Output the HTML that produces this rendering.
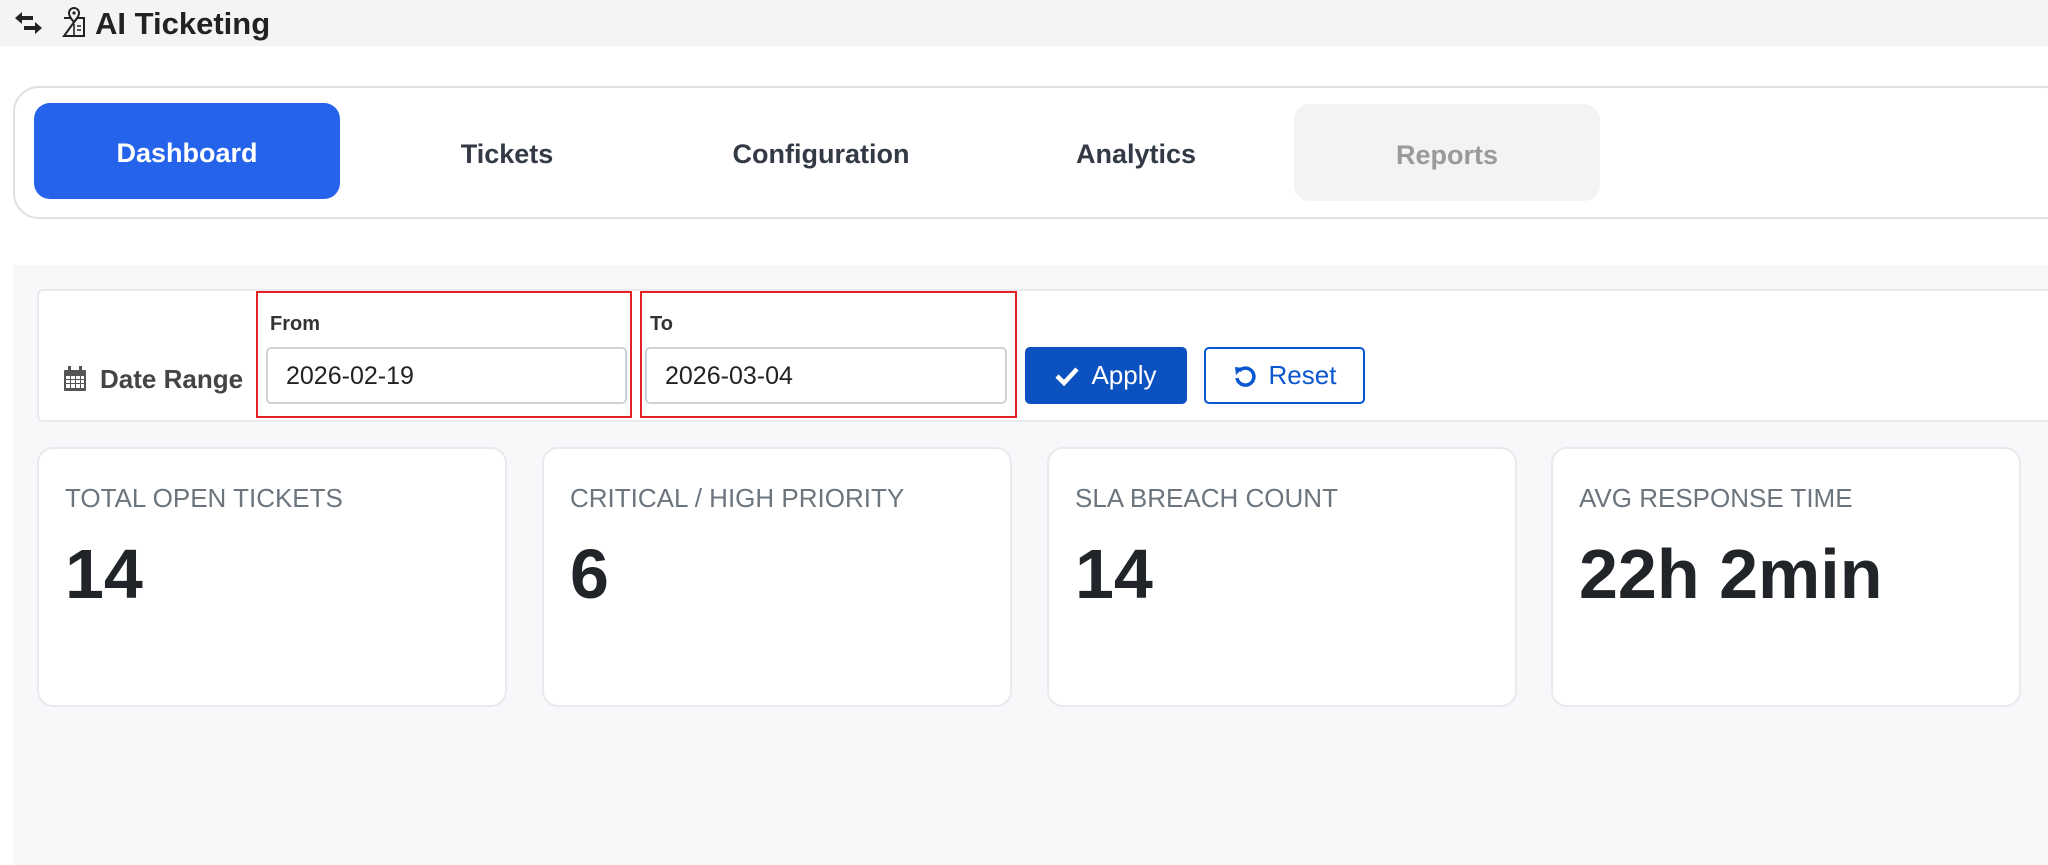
<!DOCTYPE html>
<html><head><meta charset="utf-8"><style>
*{box-sizing:border-box;margin:0;padding:0}
body{width:2048px;height:860px;overflow:hidden;background:#fff;font-family:"Liberation Sans",Arial,sans-serif;position:relative}
.hdr{position:absolute;left:0;top:0;width:2048px;height:46px;background:#f4f4f4}
.title{position:absolute;left:95px;top:6px;font-size:31px;font-weight:bold;color:#222}
.nav{position:absolute;left:13px;top:86px;width:2060px;height:133px;border:2px solid #e0e0e0;border-radius:26px;background:#fff}
.tab{position:absolute;top:107px;width:306px;height:96px;border-radius:16px;font-size:27px;font-weight:bold;color:#333a45;display:flex;align-items:center;justify-content:center;padding-top:6px}
.gray{position:absolute;left:13px;top:265px;width:2040px;height:600px;background:#f7f8fa}
.filter{position:absolute;left:37px;top:289px;width:2020px;height:133px;background:#fff;border:2px solid #e8eaed;border-radius:6px}
.red{position:absolute;top:291px;height:127px;border:2px solid #e32026}
.lbl{position:absolute;top:313px;font-size:20px;font-weight:bold;color:#333}
.inp{position:absolute;top:347px;height:57px;border:2px solid #cfd3d8;border-radius:5px;background:#fff;font-size:25px;color:#222;padding-left:18px;line-height:55px}
.btn{position:absolute;top:347px;height:57px;border-radius:5px;font-size:26px;display:flex;align-items:center;justify-content:center;gap:12px}
.card{position:absolute;top:447px;width:470px;height:260px;background:#fff;border:2px solid #e8eaed;border-radius:16px}
.card .l{position:absolute;left:26px;top:34px;font-size:26px;color:#6c757d}
.card .v{position:absolute;left:26px;top:85px;font-size:70px;font-weight:bold;color:#212529}
</style></head><body>
<div class="hdr">
<svg style="position:absolute;left:13px;top:10px" width="31" height="26" viewBox="0 0 31 26"><path d="M2 8 L9 2 V6 H20 V10 H9 V14 Z" fill="#222"/><path d="M29 18 L22 12 V16 H11 V20 H22 V24 Z" fill="#222"/></svg>
<svg style="position:absolute;left:61px;top:6px" width="26" height="32" viewBox="0 0 26 32"><path d="M3 12 H10 M16 12 H23 V30 H3 Z" fill="none" stroke="#222" stroke-width="2"/><path d="M13 2 a5 5 0 0 1 5 5 c0 4 -5 9 -5 9 s-5 -5 -5 -9 a5 5 0 0 1 5 -5z" fill="none" stroke="#222" stroke-width="2"/><circle cx="13" cy="7" r="1.6" fill="#222"/><path d="M13 18 V30 M16 20 H20 M16 24 H20" stroke="#222" stroke-width="1.6"/></svg>
<div class="title">AI Ticketing</div>
</div>
<div class="nav"></div>
<div class="tab" style="left:34px;top:103px;background:#2563eb;color:#fff;padding-top:4px">Dashboard</div>
<div class="tab" style="left:354px;top:103px">Tickets</div>
<div class="tab" style="left:668px;top:103px">Configuration</div>
<div class="tab" style="left:983px;top:103px">Analytics</div>
<div class="tab" style="left:1294px;background:#f3f3f3;color:#9a9a9a;height:97px;top:104px">Reports</div>
<div class="gray"></div>
<div class="filter"></div>
<svg style="position:absolute;left:63px;top:365px" width="24" height="27" viewBox="0 0 24 27"><rect x="1" y="5" width="22" height="21" fill="#555" rx="1"/><rect x="5" y="1" width="3" height="7" fill="#555"/><rect x="16" y="1" width="3" height="7" fill="#555"/><g fill="#fff"><rect x="3" y="11" width="4" height="3"/><rect x="8" y="11" width="4" height="3"/><rect x="13" y="11" width="4" height="3"/><rect x="18" y="11" width="3" height="3"/><rect x="3" y="15" width="4" height="3"/><rect x="8" y="15" width="4" height="3"/><rect x="13" y="15" width="4" height="3"/><rect x="18" y="15" width="3" height="3"/><rect x="3" y="19" width="4" height="4"/><rect x="8" y="19" width="4" height="4"/><rect x="13" y="19" width="4" height="4"/><rect x="18" y="19" width="3" height="4"/></g></svg>
<div style="position:absolute;left:100px;top:364px;font-size:26px;font-weight:bold;color:#444">Date Range</div>
<div class="red" style="left:256px;width:376px"></div>
<div class="red" style="left:640px;width:377px"></div>
<div class="lbl" style="left:270px">From</div>
<div class="lbl" style="left:650px">To</div>
<div class="inp" style="left:266px;width:361px">2026-02-19</div>
<div class="inp" style="left:645px;width:362px">2026-03-04</div>
<div class="btn" style="left:1025px;width:162px;background:#0b52c0;color:#fff"><svg width="24" height="20" viewBox="0 0 24 20"><path d="M2 10 L9 17 L22 3" fill="none" stroke="#fff" stroke-width="4.5"/></svg>Apply</div>
<div class="btn" style="left:1204px;width:161px;border:2px solid #0b57d0;color:#0b57d0;background:#fff"><svg width="24" height="24" viewBox="0 0 24 24"><path d="M6 7 A8.5 8.5 0 1 1 4 14" fill="none" stroke="#0b57d0" stroke-width="3.5"/><path d="M2 3 L10 4 L3 11 Z" fill="#0b57d0"/></svg>Reset</div>
<div class="card" style="left:37px"><div class="l">TOTAL OPEN TICKETS</div><div class="v">14</div></div>
<div class="card" style="left:542px"><div class="l">CRITICAL / HIGH PRIORITY</div><div class="v">6</div></div>
<div class="card" style="left:1047px"><div class="l">SLA BREACH COUNT</div><div class="v">14</div></div>
<div class="card" style="left:1551px"><div class="l">AVG RESPONSE TIME</div><div class="v">22h 2min</div></div>
</body></html>
